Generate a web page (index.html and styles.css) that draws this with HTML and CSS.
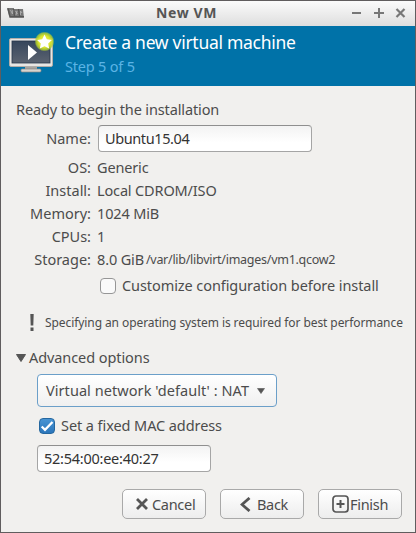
FILE: index.html
```html
<!DOCTYPE html>
<html lang="en">
<head>
<meta charset="utf-8">
<title>New VM</title>
<link rel="stylesheet" href="styles.css">
</head>
<body>
<div class="window">
  <div class="titlebar">
    <svg class="app-icon" width="18" height="12" viewBox="0 0 18 12">
      <path d="M0 1h7v1h9l1 9H2.500z" fill="#777"/>
      <path d="M1 1.500l2 8M6.500 2l1 7M11.500 2l1 7" stroke="#555" stroke-width="1.300"/>
      <path d="M3.500 3l2 4 .3-4M8.500 4l2 3M9 8l1-4M13.500 8l0-4 1.500 2" stroke="#b5b5b5" stroke-width=".8" fill="none"/>
      <path d="M3 9.500h14" stroke="#555"/>
    </svg>
    <span class="title">New VM</span>
    <svg class="controls" width="54" height="12" viewBox="0 0 54 12">
      <path d="M0 6h9M22 6h10M27 1v10" stroke="#777" stroke-width="2" fill="none"/>
      <path d="M44.500 2l8 8M52.500 2l-8 8" stroke="#777" stroke-width="2.200" fill="none"/>
    </svg>
  </div>
  <div class="banner">
    <svg class="monitor" width="48" height="44" viewBox="0 0 48 44">
      <defs>
        <linearGradient id="screen" x1="0" y1="0" x2="0" y2="1"><stop offset="0" stop-color="#36465c"/><stop offset="1" stop-color="#5b6370"/></linearGradient>
        <radialGradient id="glow"><stop offset="0" stop-color="#f5f76a"/><stop offset=".6" stop-color="#d9e32a"/><stop offset=".85" stop-color="#b4d030" stop-opacity=".8"/><stop offset="1" stop-color="#a9c92c" stop-opacity="0"/></radialGradient>
      </defs>
      <path d="M17 34h12v5H17z" fill="#a8a49f"/>
      <rect x="13" y="38" width="20" height="3" rx="1" fill="#d8d4cf" stroke="#8c8783" stroke-width=".7"/>
      <rect x="1.500" y="7.500" width="43" height="28" rx="1.500" fill="#e8e6e3" stroke="#b2aeaa"/>
      <rect x="4" y="10" width="38" height="22" fill="url(#screen)" stroke="#26364a" stroke-width=".8"/>
      <path d="M20 14v15l9-7.500z" fill="#fff"/>
      <circle cx="36.500" cy="10.500" r="10" fill="url(#glow)"/>
      <path d="M36.500 3.500l2.300 4.700 5.100.7-3.700 3.600.9 5.100-4.600-2.400-4.600 2.400.9-5.100-3.700-3.600 5.100-.7z" fill="#fff"/>
    </svg>
    <div class="headings">
      <div class="heading">Create a new virtual machine</div>
      <div class="step">Step 5 of 5</div>
    </div>
  </div>
  <div class="content">
    <div class="intro">Ready to begin the installation</div>
    <div class="name-row"><span class="label">Name:</span><div class="entry entry-name">Ubuntu15.04</div></div>
    <div class="summary">
      <span class="label">OS:</span><span class="value">Generic</span>
      <span class="label">Install:</span><span class="value">Local CDROM/ISO</span>
      <span class="label">Memory:</span><span class="value">1024 MiB</span>
      <span class="label">CPUs:</span><span class="value">1</span>
      <span class="label">Storage:</span><span class="value storage"><span>8.0 GiB</span><span class="path">/var/lib/libvirt/images/vm1.qcow2</span></span>
    </div>
    <div class="check-row customize"><span class="checkbox"></span><span>Customize configuration before install</span></div>
    <div class="warning">
      <svg width="4" height="17" viewBox="0 0 4 17"><path d="M.3 0h3.400l-.4 11.500H.7zM.5 13.500h3V17h-3z" fill="#555"/></svg>
      <span>Specifying an operating system is required for best performance</span>
    </div>
    <div class="expander">
      <svg width="10" height="8" viewBox="0 0 10 8"><path d="M.5.500h9L5 7.500z" fill="#555" stroke="#555"/></svg>
      <span>Advanced options</span>
    </div>
    <div class="combo"><span class="combo-text">Virtual network 'default' : NAT</span><span class="divider"></span>
      <svg width="8" height="6" viewBox="0 0 8 6"><path d="M.5.500h7L4 5.500z" fill="#555" stroke="#555" stroke-width=".6"/></svg>
    </div>
    <div class="check-row mac"><span class="checkbox checked"><svg width="14" height="14" viewBox="0 0 14 14"><path d="M1.700 7.500l3.300 3.300L12.500 3" fill="none" stroke="#fff" stroke-width="2.300"/></svg></span><span>Set a fixed MAC address</span></div>
    <div class="entry entry-mac">52:54:00:ee:40:27</div>
    <div class="actions">
      <div class="button cancel"><svg width="12" height="12" viewBox="0 0 12 12"><path d="M1 1l10 10M11 1L1 11" stroke="#555" stroke-width="2.800"/></svg><span>Cancel</span></div>
      <div class="button back"><svg width="11" height="15" viewBox="0 0 11 15"><path d="M9.500 1L2 7.500 9.500 14" fill="none" stroke="#555" stroke-width="2.800"/></svg><span>Back</span></div>
      <div class="button finish"><svg width="17" height="18" viewBox="0 0 17 18"><rect x="1" y="1" width="15" height="16" rx="3" fill="none" stroke="#555" stroke-width="1.700"/><path d="M4.500 9h8M8.500 5v8" stroke="#555" stroke-width="2"/></svg><span>Finish</span></div>
    </div>
  </div>
</div>
</body>
</html>
```
FILE: styles.css
```css
* { box-sizing: border-box; }
body {
  margin: 0;
  font: 14.5px/23px "Noto Sans", "Open Sans", sans-serif;
  color: #4c4c4c;
  white-space: nowrap;
}
svg { display: block; flex: none; }
.window {
  width: 416px;
  height: 533px;
  border: 1px solid #605d5e;
  background: #f1f0ee;
  overflow: hidden;
}
.titlebar {
  height: 25px;
  display: flex;
  align-items: center;
  background: linear-gradient(#fbfbfb, #dedede);
  padding: 0 9px 2px 6px;
}
.title {
  margin-left: 131px;
  font-weight: 700;
  font-size: 14px;
  letter-spacing: 0.6px;
  color: #555;
}
.controls { margin-left: auto; }
.banner {
  height: 60px;
  display: flex;
  background: #0072a8;
  padding: 6px 0 0 7px;
}
.monitor { margin-top: -1px; }
.headings { margin-left: 9px; }
.heading {
  font-size: 17.5px;
  line-height: 21px;
  color: #fff;
  letter-spacing: -0.29px;
}
.step {
  line-height: 26px;
  letter-spacing: -0.2px;
  color: #5bb4e5;
}
.content { padding: 12px 13px 0 15px; }
.intro { letter-spacing: -0.13px; }
.name-row {
  display: flex;
  align-items: center;
  margin-top: 4px;
  gap: 7px;
}
.label { text-align: right; }
.name-row .label { width: 75px; }
.entry {
  height: 27px;
  border: 1px solid #a5a5a5;
  border-top-color: #8f8f8f;
  border-radius: 4px;
  background: linear-gradient(#f3f3f3, #fff 65%);
  padding: 1px 6px;
  color: #333;
}
.entry-name { width: 214px; letter-spacing: -0.4px; }
.summary {
  display: grid;
  grid-template-columns: 75px 1fr;
  grid-auto-rows: 23px;
  column-gap: 6px;
  margin-top: 4px;
}
.value { letter-spacing: -0.15px; }
.storage { display: flex; gap: 2px; }
.path { font-size: 12.5px; letter-spacing: -0.27px; }
.check-row {
  display: flex;
  align-items: center;
  gap: 6px;
  letter-spacing: -0.08px;
}
.customize { margin: 3px 0 0 84px; }
.checkbox {
  width: 16px;
  height: 16px;
  border: 1px solid #969696;
  border-radius: 4px;
  background: #fafafa;
}
.checked {
  border-color: #25679f;
  background: linear-gradient(#4894d3, #2b76bb);
}
.warning {
  display: flex;
  align-items: center;
  gap: 11px;
  margin: 14px 0 0 14px;
  font-size: 12px;
  letter-spacing: -0.08px;
}
.expander {
  display: flex;
  align-items: center;
  gap: 3px;
  margin-top: 12px;
  letter-spacing: -0.08px;
}
.combo {
  display: flex;
  align-items: center;
  width: 240px;
  height: 33px;
  margin: 5px 0 0 21px;
  padding: 0 11px 0 8px;
  border: 1px solid #6b9fc9;
  border-radius: 4px;
  background: linear-gradient(#fff, #f0f0f0);
}
.combo-text { flex: none; width: 206px; letter-spacing: 0.06px; }
.divider {
  width: 1px;
  height: 25px;
  margin-right: 5px;
  background: #d5d5d5;
}
.mac { margin: 7px 0 0 23px; }
.entry-mac {
  width: 174px;
  margin: 8px 0 0 21px;
  letter-spacing: -0.25px;
}
.actions {
  display: flex;
  justify-content: flex-end;
  gap: 14px;
  margin-top: 17px;
}
.button {
  display: flex;
  align-items: center;
  width: 84px;
  height: 30px;
  border: 1px solid #a9a9a9;
  border-radius: 5px;
  background: linear-gradient(#fff, #ededed);
  letter-spacing: -0.3px;
}
.cancel { padding-left: 13px; gap: 4px; }
.back { padding-left: 19px; gap: 6px; }
.finish { padding-left: 13px; gap: 1px; }
```
